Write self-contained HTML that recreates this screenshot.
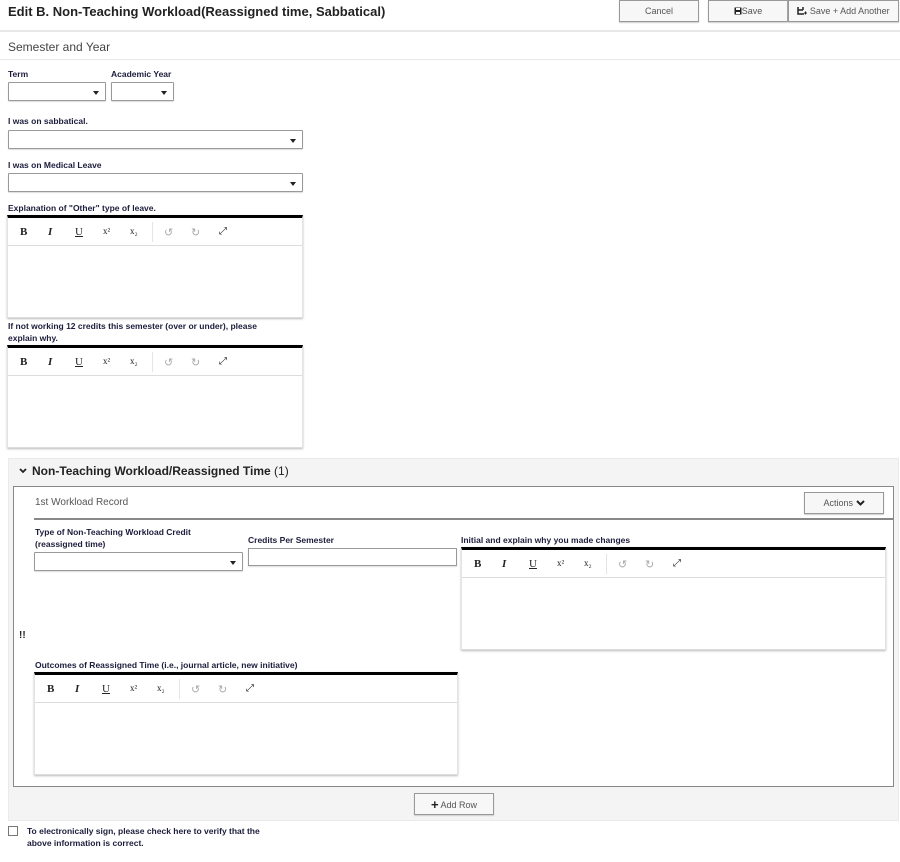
<!DOCTYPE html>
<html><head><meta charset="utf-8"><style>
*{box-sizing:border-box;margin:0;padding:0}
body{width:900px;height:862px;background:#fff;font-family:"Liberation Sans",sans-serif;position:relative;overflow:hidden;color:#222}
.a{position:absolute}
.lbl{position:absolute;font-size:8.5px;font-weight:bold;color:#1c1c3c;line-height:12px}
.sel{position:absolute;border:1px solid #999;background:#fff;border-radius:1px;box-shadow:0 1px 1px #ddd}
.sel:after{content:"";position:absolute;right:6px;top:50%;margin-top:-1px;border-left:3.5px solid transparent;border-right:3.5px solid transparent;border-top:4px solid #222}
.btn{position:absolute;border:1px solid #999;background:#f7f7f7;font-size:9px;color:#555;text-align:center;box-shadow:0 1px 1px #ccc}
.ed{position:absolute;border-top:3px solid #000;background:#fff;box-shadow:0 1px 2px #bbb;border-left:1px solid #e4e4e4;border-right:1px solid #e4e4e4;border-bottom:1px solid #ddd}
.tb{height:28px;border-bottom:1px solid #ddd;position:relative;font-family:"Liberation Serif",serif;font-size:11px}
.tb span{position:absolute;top:8px}
.sep{position:absolute;left:144px;top:4px;width:1px;height:20px;background:#e5e5e5}
</style></head><body>
<div class="a" style="left:8px;top:4px;font-size:13px;font-weight:bold;color:#222">Edit B. Non-Teaching Workload(Reassigned time, Sabbatical)</div>
<div class="btn" style="left:619px;top:0;width:80px;height:22px;line-height:21px">Cancel</div>
<div class="btn" style="left:708px;top:0;width:80px;height:22px;line-height:21px"><svg width="8" height="8" viewBox="0 0 8 8" style="vertical-align:-1px"><rect x="0.5" y="0.5" width="7" height="7" fill="#222"/><rect x="2" y="1" width="4" height="2" fill="#fff"/><rect x="2" y="5" width="4" height="2" fill="#fff"/></svg>Save</div>
<div class="btn" style="left:788px;top:0;width:111px;height:22px;line-height:21px"><svg width="10" height="9" viewBox="0 0 10 9" style="vertical-align:-1px"><path d="M1 1v7h6M1 1M1 4h5M6 1v3" stroke="#222" stroke-width="1.5" fill="none"/><path d="M7 7h3M8.5 5.5v3" stroke="#222" stroke-width="1"/></svg> Save + Add Another</div>
<div class="a" style="left:0;top:30px;width:900px;height:2px;background:#e8e8e8"></div>
<div class="a" style="left:8px;top:40px;font-size:12px;color:#444">Semester and Year</div>
<div class="a" style="left:0;top:59px;width:900px;height:1px;background:#e8e8e8"></div>

<div class="lbl" style="left:8px;top:68px">Term</div>
<div class="lbl" style="left:111px;top:68px">Academic Year</div>
<div class="sel" style="left:8px;top:82px;width:98px;height:19px"></div>
<div class="sel" style="left:111px;top:82px;width:63px;height:19px"></div>

<div class="lbl" style="left:8px;top:115px">I was on sabbatical.</div>
<div class="sel" style="left:8px;top:130px;width:295px;height:19px"></div>
<div class="lbl" style="left:8px;top:159px">I was on Medical Leave</div>
<div class="sel" style="left:8px;top:173px;width:295px;height:19px"></div>

<div class="lbl" style="left:8px;top:202px">Explanation of "Other" type of leave.</div>
<div class="ed" style="left:7px;top:215px;width:296px;height:103px"><div class="tb"><span style="left:12px;font-weight:bold">B</span><span style="left:40px;font-style:italic;font-weight:bold">I</span><span style="left:67px;text-decoration:underline">U</span><span style="left:95px;font-size:9px">x²</span><span style="left:122px;font-size:9px">x₂</span><div class="sep"></div><span style="left:156px;color:#aaa">↺</span><span style="left:183px;color:#aaa">↻</span><span style="left:211px;font-size:10px">⤢</span></div></div>

<div class="lbl" style="left:8px;top:320px;width:272px">If not working 12 credits this semester (over or under), please explain why.</div>
<div class="ed" style="left:7px;top:345px;width:296px;height:103px"><div class="tb"><span style="left:12px;font-weight:bold">B</span><span style="left:40px;font-style:italic;font-weight:bold">I</span><span style="left:67px;text-decoration:underline">U</span><span style="left:95px;font-size:9px">x²</span><span style="left:122px;font-size:9px">x₂</span><div class="sep"></div><span style="left:156px;color:#aaa">↺</span><span style="left:183px;color:#aaa">↻</span><span style="left:211px;font-size:10px">⤢</span></div></div>

<div class="a" style="left:8px;top:458px;width:891px;height:363px;background:#f4f4f4;border:1px solid #eaeaea"></div>
<div class="a" style="left:19px;top:464px;font-size:12px;font-weight:bold;color:#222"><svg width="8" height="6" viewBox="0 0 8 6" style="vertical-align:1px;margin-right:5px"><path d="M1 1l3 3 3-3" stroke="#222" stroke-width="1.8" fill="none"/></svg>Non-Teaching Workload/Reassigned Time <span style="font-weight:normal">(1)</span></div>
<div class="a" style="left:13px;top:486px;width:881px;height:301px;background:#fff;border:1px solid #888"></div>
<div class="a" style="left:35px;top:497px;font-size:10px;color:#555">1st Workload Record</div>
<div class="btn" style="left:804px;top:492px;width:80px;height:22px;line-height:21px">Actions <svg width="9" height="6" viewBox="0 0 9 6"><path d="M1 1l3.5 3.5L8 1" stroke="#222" stroke-width="2" fill="none"/></svg></div>
<div class="a" style="left:34px;top:518px;width:860px;height:2px;background:#888"></div>

<div class="lbl" style="left:35px;top:526px;width:200px">Type of Non-Teaching Workload Credit (reassigned time)</div>
<div class="sel" style="left:34px;top:552px;width:209px;height:19px"></div>
<div class="lbl" style="left:248px;top:534px">Credits Per Semester</div>
<div class="a" style="left:248px;top:548px;width:209px;height:18px;border:1px solid #999;box-shadow:0 1px 1px #ddd"></div>
<div class="lbl" style="left:461px;top:534px">Initial and explain why you made changes</div>
<div class="ed" style="left:461px;top:547px;width:425px;height:103px"><div class="tb"><span style="left:12px;font-weight:bold">B</span><span style="left:40px;font-style:italic;font-weight:bold">I</span><span style="left:67px;text-decoration:underline">U</span><span style="left:95px;font-size:9px">x²</span><span style="left:122px;font-size:9px">x₂</span><div class="sep"></div><span style="left:156px;color:#aaa">↺</span><span style="left:183px;color:#aaa">↻</span><span style="left:211px;font-size:10px">⤢</span></div></div>

<div class="a" style="left:19px;top:630px;font-size:10px;font-weight:bold;color:#222">!!</div>

<div class="lbl" style="left:35px;top:659px">Outcomes of Reassigned Time (i.e., journal article, new initiative)</div>
<div class="ed" style="left:34px;top:672px;width:424px;height:103px"><div class="tb"><span style="left:12px;font-weight:bold">B</span><span style="left:40px;font-style:italic;font-weight:bold">I</span><span style="left:67px;text-decoration:underline">U</span><span style="left:95px;font-size:9px">x²</span><span style="left:122px;font-size:9px">x₂</span><div class="sep"></div><span style="left:156px;color:#aaa">↺</span><span style="left:183px;color:#aaa">↻</span><span style="left:211px;font-size:10px">⤢</span></div></div>

<div class="btn" style="left:414px;top:793px;width:80px;height:22px;line-height:21px;background:#f7f7f7"><b style="font-size:13px;color:#222;vertical-align:-1px">+</b> Add Row</div>

<div class="a" style="left:8px;top:826px;width:10px;height:10px;border:1px solid #777;background:#fff"></div>
<div class="lbl" style="left:27px;top:825px;width:250px">To electronically sign, please check here to verify that the above information is correct.</div>
</body></html>
